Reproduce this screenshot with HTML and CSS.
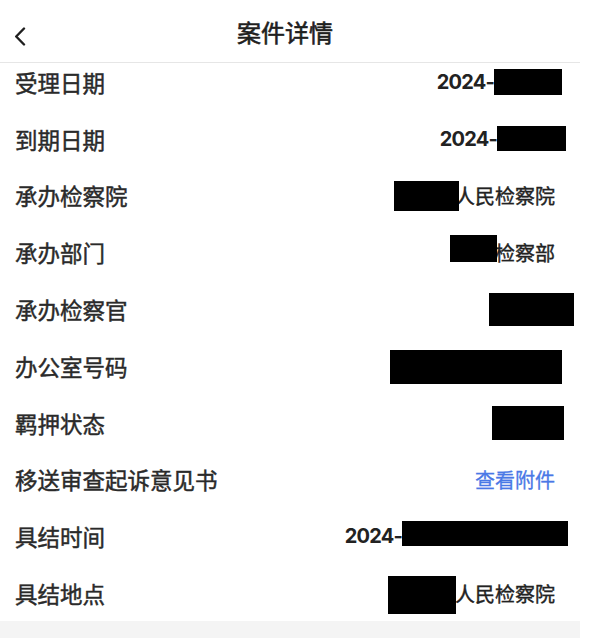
FILE: index.html
```html
<!DOCTYPE html>
<html lang="zh-CN">
<head>
<meta charset="utf-8">
<title>案件详情</title>
<link rel="stylesheet" href="styles.css">
</head>
<body>
<div class="app">
  <header class="header">
    <span class="back" aria-label="返回">
      <svg width="12" height="19" viewBox="0 0 12 19"><path d="M10 1.5 L2.2 9.5 L10 17.5" fill="none" stroke="#1f1f1f" stroke-width="2.4" stroke-linecap="round" stroke-linejoin="round"/></svg>
    </span>
    <h1 class="title">案件详情</h1>
    <span class="spacer"></span>
  </header>
  <main class="list">
    <div class="row"><span class="label">受理日期</span><span class="value"><span class="num">2024-</span><span class="redact r1"></span></span></div>
    <div class="row"><span class="label">到期日期</span><span class="value"><span class="num">2024-</span><span class="redact r2"></span></span></div>
    <div class="row"><span class="label">承办检察院</span><span class="value"><span class="redact r3"></span><span class="txt">人民检察院</span></span></div>
    <div class="row"><span class="label">承办部门</span><span class="value"><span class="redact r4"></span><span class="txt">检察部</span></span></div>
    <div class="row"><span class="label">承办检察官</span><span class="value"><span class="redact r5"></span></span></div>
    <div class="row"><span class="label">办公室号码</span><span class="value"><span class="redact r6"></span></span></div>
    <div class="row"><span class="label">羁押状态</span><span class="value"><span class="redact r7"></span></span></div>
    <div class="row"><span class="label">移送审查起诉意见书</span><span class="value"><a class="link" href="#">查看附件</a></span></div>
    <div class="row"><span class="label">具结时间</span><span class="value"><span class="num">2024-</span><span class="redact r9"></span></span></div>
    <div class="row"><span class="label">具结地点</span><span class="value"><span class="redact r10"></span><span class="txt">人民检察院</span></span></div>
  </main>
  <div class="footer"></div>
</div>
</body>
</html>
```

FILE: styles.css
```css
html, body {
  margin: 0;
  padding: 0;
  background: #ffffff;
}
body {
  font-family: Inter, "Noto Sans CJK SC", sans-serif;
  color: #262626;
}
.app {
  width: 580px;
  height: 638px;
  display: flex;
  flex-direction: column;
  overflow: hidden;
}
.header {
  position: relative;
  z-index: 1;
  flex: 0 0 auto;
  height: 62px;
  display: grid;
  grid-template-columns: 1fr auto 1fr;
  align-items: center;
  padding: 0 24px 0 14px;
  background: #ffffff;
  border-bottom: 1.5px solid #e6e6e6;
}
.back {
  display: flex;
  align-items: center;
  margin-top: 10px;
}
.title {
  margin: 0;
  font-size: 24px;
  font-weight: 400;
  -webkit-text-stroke: 0.6px #1f1f1f;
  color: #1f1f1f;
  font-family: "Noto Sans CJK SC", sans-serif;
  line-height: 1;
  margin-top: 2px;
}
.list {
  flex: 0 0 auto;
  margin-top: -9.5px;
  display: flex;
  flex-direction: column;
}
.row {
  height: 56.8px;
  display: flex;
  align-items: center;
  justify-content: space-between;
  padding: 0 25px 0 15px;
}
.label {
  font-family: "Noto Sans CJK SC", sans-serif;
  font-size: 22.5px;
  font-weight: 400;
  -webkit-text-stroke: 0.45px #2a2a2a;
  color: #2a2a2a;
}
.value {
  display: flex;
  align-items: center;
  font-size: 20px;
  font-weight: 400;
  color: #222222;
}
.txt {
  font-family: "Noto Sans CJK SC", sans-serif;
  -webkit-text-stroke: 0.4px #222222;
}
.num {
  font-family: Inter, sans-serif;
  font-weight: 700;
  font-size: 20px;
  letter-spacing: -0.8px;
}
.link {
  font-family: "Noto Sans CJK SC", sans-serif;
  -webkit-text-stroke: 0.3px #4a78e6;
  color: #4a78e6;
  text-decoration: none;
}
.redact {
  display: block;
  background: #000000;
  position: relative;
}
.r1 { width: 68px; height: 26px; margin-right: -7px; }
.r2 { width: 69px; height: 25px; margin-right: -11px; margin-top: -1px; }
.r3 { width: 65px; height: 30px; margin-right: -4px; margin-top: 2px; }
.r4 { width: 47px; height: 27px; margin-right: -2px; margin-top: -7px; }
.r5 { width: 85px; height: 33px; margin-right: -19px; }
.r6 { width: 172px; height: 34px; margin-right: -7px; margin-top: 2px; }
.r7 { width: 72px; height: 34px; margin-right: -9px; margin-top: 1px; }
.r9 { width: 166px; height: 25px; margin-right: -13px; margin-top: -5px; }
.r10 { width: 68px; height: 38px; margin-right: -1px; margin-top: 4px; }
.footer {
  flex: 1 1 auto;
  background: #f4f4f4;
}
```
